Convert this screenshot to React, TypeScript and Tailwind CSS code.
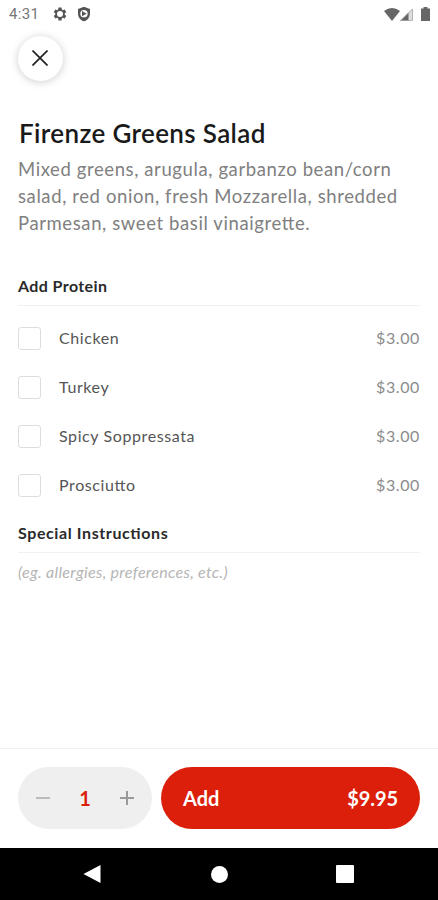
import { useState } from "react"

const options = [
  { name: "Chicken", price: 3 },
  { name: "Turkey", price: 3 },
  { name: "Spicy Soppressata", price: 3 },
  { name: "Prosciutto", price: 3 },
]

export default function App() {
  const [qty, setQty] = useState(1)
  const [picked, setPicked] = useState<string[]>([])

  const toggle = (n: string) => setPicked(picked.includes(n) ? picked.filter(p => p !== n) : [...picked, n])
  const total = (9.95 + picked.length * 3) * qty

  return (
    <div className="flex flex-col w-full h-screen bg-white overflow-hidden font-['Lato',sans-serif] [font-feature-settings:'liga']">
      <header className="flex items-center justify-between h-7 pl-[9px] pr-2 shrink-0">
        <div className="flex items-center text-[#555]">
          <span className="font-['Roboto',sans-serif] text-[15px] tracking-[0.3px] text-[#777]">4:31</span>
          <svg className="ml-[13px] w-4 h-4" viewBox="0 0 24 24" fill="currentColor"><path d="M19.14 12.94a7 7 0 0 0 0-1.88l2.03-1.58a.5.5 0 0 0 .12-.61l-1.92-3.32a.5.5 0 0 0-.59-.22l-2.39.96a7 7 0 0 0-1.62-.94l-.36-2.54a.5.5 0 0 0-.48-.41h-3.84a.5.5 0 0 0-.47.41l-.36 2.54a7 7 0 0 0-1.62.94l-2.39-.96a.5.5 0 0 0-.59.22L2.74 8.87a.5.5 0 0 0 .12.61l2.03 1.58a7 7 0 0 0 0 1.88l-2.03 1.58a.5.5 0 0 0-.12.61l1.92 3.32c.12.22.37.29.59.22l2.39-.96c.5.38 1.03.7 1.62.94l.36 2.54c.05.24.24.41.48.41h3.84c.24 0 .44-.17.47-.41l.36-2.54a7 7 0 0 0 1.62-.94l2.39.96c.22.08.47 0 .59-.22l1.92-3.32a.5.5 0 0 0-.12-.61zM12 16.500a4.500 4.500 0 1 1 0-9 4.500 4.500 0 0 1 0 9z" fillRule="evenodd" /></svg>
          <svg className="ml-2 w-4 h-4" viewBox="0 0 24 24" fill="currentColor"><path fillRule="evenodd" d="M12 1 3 4.500v7c0 5.500 3.800 10 9 11.500 5.200-1.500 9-6 9-11.500v-7zM12 6a5.500 5.500 0 1 1 0 11 5.500 5.500 0 0 1 0-11z" /><path d="m9 7.500 7 4-7 4z" /></svg>
        </div>
        <div className="flex items-center text-[#666]">
          <svg className="w-4 h-[13px]" viewBox="0 0 16 13" fill="currentColor"><path d="M0 3Q8-3 16 3L8 13z" /></svg>
          <svg className="w-[13px] h-[13px]" viewBox="0 0 13 13"><path d="M13 0v13H0z" fill="#ddd" /><path d="M8.500 4.500V13H0z" fill="currentColor" /><path d="M12.500 1v11.500H1z" fill="none" stroke="#aaa" strokeWidth="0.800" /></svg>
          <svg className="ml-2 w-[9px] h-[14px]" viewBox="0 0 9 14" fill="currentColor"><path d="M0 1.500h2.500V0h4v1.500H9V14H0z" /></svg>
        </div>
      </header>

      <main className="flex-1 px-[18px]">
        <button aria-label="Close" className="flex items-center justify-center w-[45px] h-[45px] mt-2 rounded-full bg-white shadow-[0_1px_9px_rgba(0,0,0,0.2)]">
          <svg className="w-4 h-4 mr-px mb-px" viewBox="0 0 16 16" stroke="#222" strokeWidth="1.700"><path d="m.5.5 15 15M15.500.5l-15 15" /></svg>
        </button>
        <h1 className="mt-9 pl-px text-[26px] leading-8 tracking-[0.36px] font-semibold text-[#1a1a1a]">Firenze Greens Salad</h1>
        <p className="mt-[7px] text-[18.500px] leading-[27px] tracking-[0.6px] text-[#808080]">Mixed greens, arugula, garbanzo bean/corn<br />salad, red onion, fresh Mozzarella, shredded<br />Parmesan, sweet basil vinaigrette.</p>

        <h2 className="mt-[37px] pb-[7px] text-base leading-6 tracking-[0.4px] font-bold text-[#2a2a2a] border-b border-[#f1f1f1]">Add Protein</h2>
        <div className="pt-2">
          {options.map(o => (
            <label key={o.name} className="flex items-center h-[49px] text-base tracking-[0.6px] text-[#555]">
              <input type="checkbox" checked={picked.includes(o.name)} onChange={() => toggle(o.name)} className="appearance-none w-[23px] h-[23px] mr-[18px] border border-[#ddd] rounded-[3px] checked:bg-[#dc1f0a]" />
              <span className="pb-0.5">{o.name}</span>
              <span className="ml-auto pb-0.5 text-[#8c8c8c]">${o.price.toFixed(2)}</span>
            </label>
          ))}
        </div>
        <h2 className="mt-[11px] pb-[7px] text-base leading-6 tracking-[0.6px] font-bold text-[#2a2a2a] border-b border-[#f1f1f1]">Special Instructions</h2>
        <input placeholder="(eg. allergies, preferences, etc.)" className="block w-full mt-[7px] text-base leading-6 tracking-[0.3px] italic outline-none placeholder:text-[#b5b5b5]" />
      </main>

      <footer className="flex h-[100px] px-[18px] pt-[18px] gap-[9px] shrink-0 border-t border-[#f1f1f1]">
        <div className="flex items-center justify-between w-[134px] h-[62px] px-[18px] rounded-full bg-[#efefef]">
          <button aria-label="Decrease" onClick={() => setQty(Math.max(1, qty - 1))}><svg className="w-3.5 h-3.5" viewBox="0 0 14 14" stroke="#bbb" strokeWidth="2"><path d="M0 7h14" /></svg></button>
          <span className="text-xl font-bold text-[#dc1f0a]">{qty}</span>
          <button aria-label="Increase" onClick={() => setQty(qty + 1)}><svg className="w-3.5 h-3.5" viewBox="0 0 14 14" stroke="#999" strokeWidth="2"><path d="M0 7h14M7 0v14" /></svg></button>
        </div>
        <button className="flex flex-1 items-center justify-between h-[62px] px-[22px] rounded-full bg-[#dc1f0a] text-white text-xl font-bold"><span>Add</span><span className="tracking-[-0.1px]">${total.toFixed(2)}</span></button>
      </footer>
      <nav className="flex items-center justify-between h-[52px] pl-[83px] pr-[84px] shrink-0 bg-black">
        <svg className="w-[18px] h-5" viewBox="0 0 18 20" fill="#fff"><path d="M17.500 1v18L.5 10z" /></svg>
        <span className="w-[17px] h-[17px] ml-px rounded-full bg-white" />
        <span className="w-[18px] h-[18px] rounded-[1px] bg-white" />
      </nav>
    </div>
  )
}
